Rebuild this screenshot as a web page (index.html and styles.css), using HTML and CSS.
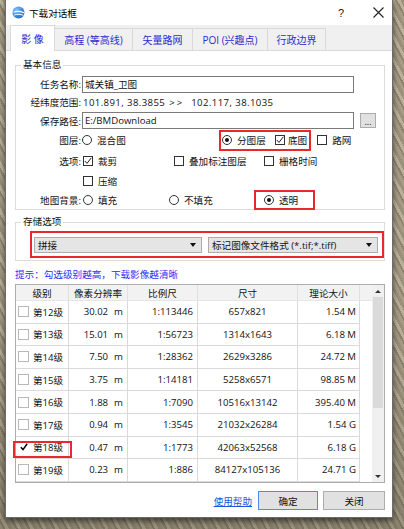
FILE: index.html
```html
<!DOCTYPE html>
<html lang="zh-CN">
<head>
<meta charset="utf-8">
<title>下载对话框</title>
<link rel="stylesheet" href="styles.css">
</head>
<body>
<div class="dialog">
  <div class="titlebar">
    <svg class="appicon" width="13" height="13" viewBox="0 0 13 13">
      <defs>
        <radialGradient id="g" cx="0.35" cy="0.3" r="0.8">
          <stop offset="0" stop-color="#7cc4ff"/>
          <stop offset="1" stop-color="#1464c8"/>
        </radialGradient>
      </defs>
      <circle cx="6.5" cy="6.5" r="6" fill="url(#g)"/>
      <path d="M1.5 6.2 C4 5 8 5.2 12.3 6.8" stroke="#fff" stroke-width="1.1" fill="none"/>
      <path d="M2.2 9 C5 8 8.5 8.2 11.5 9.3" stroke="#fff" stroke-width="1" fill="none"/>
    </svg>
    <span class="title">下载对话框</span>
    <span class="help">?</span>
    <span class="close">
      <svg width="11" height="11" viewBox="0 0 11 11"><path d="M0.5 0.5 L10.5 10.5 M10.5 0.5 L0.5 10.5" stroke="#222" stroke-width="1.1"/></svg>
    </span>
  </div>
  <div class="tabs">
    <span class="tab-lead"></span>
    <span class="tab active">影&nbsp;像</span>
    <span class="tab w2">高程 (等高线)</span>
    <span class="tab w3">矢量路网</span>
    <span class="tab w4">POI (兴趣点)</span>
    <span class="tab w5">行政边界</span>
    <span class="tab-fill"></span>
  </div>
  <div class="panel">
    <fieldset class="group basic">
      <legend>基本信息</legend>
      <div class="row r1">
        <span class="lbl">任务名称:</span>
        <span class="input">城关镇_卫图</span>
      </div>
      <div class="row r2">
        <span class="lbl">经纬度范围:</span>
        <span class="coord">101.891, 38.3855</span>
        <span class="arrow">&gt;&gt;</span>
        <span class="coord">102.117, 38.1035</span>
      </div>
      <div class="row r3">
        <span class="lbl">保存路径:</span>
        <span class="input">E:/BMDownload</span>
        <span class="browse">...</span>
      </div>
      <div class="row r4">
        <span class="lbl">图层:</span>
        <span class="opt w-mix"><span class="radio"></span>混合图</span>
        <span class="redbox rb-layer">
          <span class="opt w-split"><span class="radio on"></span>分图层</span>
          <span class="opt tight"><span class="cb on"><svg width="8" height="8" viewBox="0 0 8 8"><path d="M0.8 4 L3 6.4 L7.3 0.8" stroke="#222" stroke-width="1" fill="none"/></svg></span>底图</span>
        </span>
        <span class="opt road"><span class="cb"></span>路网</span>
      </div>
      <div class="row r5">
        <span class="lbl">选项:</span>
        <span class="opt w-cut"><span class="cb on"><svg width="8" height="8" viewBox="0 0 8 8"><path d="M0.8 4 L3 6.4 L7.3 0.8" stroke="#222" stroke-width="1" fill="none"/></svg></span>裁剪</span>
        <span class="opt w-label"><span class="cb"></span>叠加标注图层</span>
        <span class="opt"><span class="cb"></span>栅格时间</span>
      </div>
      <div class="row r6">
        <span class="lbl"></span>
        <span class="opt"><span class="cb"></span>压缩</span>
      </div>
      <div class="row r7">
        <span class="lbl">地图背景:</span>
        <span class="opt w-fill"><span class="radio"></span>填充</span>
        <span class="opt w-nofill"><span class="radio"></span>不填充</span>
        <span class="redbox rb-bg">
          <span class="opt"><span class="radio on"></span>透明</span>
        </span>
      </div>
    </fieldset>

    <fieldset class="group store">
      <legend>存储选项</legend>
      <div class="redbox rb-store">
        <span class="select s1"><span>拼接</span><span class="tri"></span></span>
        <span class="select s2"><span>标记图像文件格式 (*.tif;*.tiff)</span><span class="tri"></span></span>
      </div>
    </fieldset>

    <div class="hint">提示：勾选级别越高，下载影像越清晰</div>

    <div class="table">
      <div class="grid">
        <div class="th">级别</div>
        <div class="th">像素分辨率</div>
        <div class="th">比例尺</div>
        <div class="th">尺寸</div>
        <div class="th">理论大小</div>
        <div class="th blank"></div>

        <div class="td lv"><span class="tcb"></span>第12级</div>
        <div class="td num">30.02<span class="unit">m</span></div>
        <div class="td num">1:113446</div>
        <div class="td ctr">657x821</div>
        <div class="td num sz">1.54 M</div>
        <div class="td blank"></div>

        <div class="td lv"><span class="tcb"></span>第13级</div>
        <div class="td num">15.01<span class="unit">m</span></div>
        <div class="td num">1:56723</div>
        <div class="td ctr">1314x1643</div>
        <div class="td num sz">6.18 M</div>
        <div class="td blank"></div>

        <div class="td lv"><span class="tcb"></span>第14级</div>
        <div class="td num">7.50<span class="unit">m</span></div>
        <div class="td num">1:28362</div>
        <div class="td ctr">2629x3286</div>
        <div class="td num sz">24.72 M</div>
        <div class="td blank"></div>

        <div class="td lv"><span class="tcb"></span>第15级</div>
        <div class="td num">3.75<span class="unit">m</span></div>
        <div class="td num">1:14181</div>
        <div class="td ctr">5258x6571</div>
        <div class="td num sz">98.85 M</div>
        <div class="td blank"></div>

        <div class="td lv"><span class="tcb"></span>第16级</div>
        <div class="td num">1.88<span class="unit">m</span></div>
        <div class="td num">1:7090</div>
        <div class="td ctr">10516x13142</div>
        <div class="td num sz">395.40 M</div>
        <div class="td blank"></div>

        <div class="td lv"><span class="tcb"></span>第17级</div>
        <div class="td num">0.94<span class="unit">m</span></div>
        <div class="td num">1:3545</div>
        <div class="td ctr">21032x26284</div>
        <div class="td num sz">1.54 G</div>
        <div class="td blank"></div>

        <div class="td lv"><span class="tcb on"><svg width="8" height="8" viewBox="0 0 8 8"><path d="M0.8 4.2 L3 6.6 L7.2 0.8" stroke="#000" stroke-width="1.5" fill="none"/></svg></span>第18级<span class="mark"></span></div>
        <div class="td num">0.47<span class="unit">m</span></div>
        <div class="td num">1:1773</div>
        <div class="td ctr">42063x52568</div>
        <div class="td num sz">6.18 G</div>
        <div class="td blank"></div>

        <div class="td lv"><span class="tcb"></span>第19级</div>
        <div class="td num">0.23<span class="unit">m</span></div>
        <div class="td num">1:886</div>
        <div class="td ctr">84127x105136</div>
        <div class="td num sz">24.71 G</div>
        <div class="td blank"></div>
      </div>
      <div class="scrollbar">
        <span class="sb-btn"><span class="up"></span></span>
        <span class="thumb"></span>
        <span class="track"></span>
        <span class="sb-btn"><span class="down"></span></span>
      </div>
    </div>

    <div class="actions">
      <a class="link">使用帮助</a>
      <span class="btn default">确定</span>
      <span class="btn">关闭</span>
    </div>
  </div>
</div>
</body>
</html>
```

FILE: styles.css
```css
html, body {
  margin: 0;
  padding: 0;
}
body {
  width: 404px;
  height: 529px;
  overflow: hidden;
  background:
    linear-gradient(180deg, rgba(0,0,0,0) 0 60%, rgba(60,55,40,0.25) 100%),
    repeating-linear-gradient(62deg, #a79d86 0 3px, #8e8571 3px 5px, #bab09a 5px 8px, #9a917b 8px 11px),
    #a39a84;
}
.dialog {
  margin-left: 5px;
  width: 388px;
  height: 518px;
  box-sizing: border-box;
  border: 1px solid #6c6c6c;
  border-top: none;
  background: #fff;
  display: flex;
  flex-direction: column;
  box-shadow: 0 3px 6px rgba(0,0,0,0.55);
  font-family: "Open Sans", "Noto Sans CJK SC", sans-serif;
  font-size: 9.6px;
  color: #111;
}

/* title bar */
.titlebar {
  height: 25px;
  flex: none;
  display: flex;
  align-items: center;
  padding-left: 6px;
  background: #fff;
}
.appicon { flex: none; }
.title {
  margin-left: 4px;
  font-size: 9.6px;
  color: #000;
}
.help {
  margin-left: auto;
  width: 14px;
  margin-right: 16px;
  text-align: center;
  font-family: "Liberation Sans", sans-serif;
  font-size: 11px;
  color: #222;
}
.close {
  width: 28px;
  display: flex;
  justify-content: center;
}

/* tabs */
.tabs {
  height: 26px;
  flex: none;
  display: flex;
  align-items: flex-end;
  background: #f0f0f0;
}
.tab-lead, .tab-fill {
  height: 26px;
  box-sizing: border-box;
  border-bottom: 1px solid #d9d9d9;
}
.tab-lead { width: 4px; flex: none; }
.tab-fill { flex: 1; }
.tab {
  flex: none;
  box-sizing: border-box;
  height: 23px;
  display: flex;
  align-items: center;
  justify-content: center;
  border-top: 1px solid #d9d9d9;
  border-right: 1px solid #d9d9d9;
  border-bottom: 1px solid #d9d9d9;
  color: #2b2bd2;
  font-size: 10px;
  background: #f0f0f0;
}
.tab.active {
  width: 45px;
  height: 26px;
  background: #fff;
  border-left: 1px solid #d9d9d9;
  border-bottom: none;
  color: #2424d8;
}
.tab.w2 { width: 78px; }
.tab.w3 { width: 60px; }
.tab.w4 { width: 75px; }
.tab.w5 { width: 58px; }

/* panel */
.panel {
  flex: 1;
  display: flex;
  flex-direction: column;
  padding: 7px 7px 0 9px;
  background: #fff;
}
.group {
  margin: 0;
  padding: 0;
  border: 1px solid #dcdcdc;
  min-width: 0;
}
.group legend {
  margin-left: 5px;
  padding: 0 2px;
  line-height: 14px;
  font-size: 9.6px;
  color: #111;
}
.basic { padding-top: 3px; }
.row {
  display: flex;
  align-items: center;
}
.r1 { height: 18px; }
.r2 { height: 18px; }
.r3 { height: 19px; }
.r4 { height: 20px; }
.r5 { height: 22px; }
.r6 { height: 18px; }
.r7 { height: 19px; }
.lbl {
  width: 65px;
  flex: none;
  text-align: right;
  margin-right: 1px;
  white-space: nowrap;
}
.input {
  width: 272px;
  height: 17px;
  box-sizing: border-box;
  border: 1px solid #7a7a7a;
  padding-left: 2px;
  display: flex;
  align-items: center;
  background: #fff;
}
.coord { margin-left: 1px; white-space: nowrap; letter-spacing: 0.4px; }
.arrow { margin: 0 6px 0 4px; letter-spacing: 2px; }
.browse {
  margin-left: 6px;
  width: 16px;
  height: 15px;
  box-sizing: border-box;
  border: 1px solid #adadad;
  background: #e1e1e1;
  display: flex;
  align-items: flex-end;
  justify-content: center;
  line-height: 10px;
  font-size: 9px;
}
.opt {
  display: inline-flex;
  align-items: center;
  gap: 5px;
  flex: none;
  white-space: nowrap;
}
.opt.tight { gap: 3px; }
.radio, .cb {
  width: 10px;
  height: 10px;
  box-sizing: border-box;
  border: 1px solid #333;
  background: #fff;
  flex: none;
  display: flex;
  align-items: center;
  justify-content: center;
}
.radio { border-radius: 50%; }
.radio.on::after {
  content: "";
  width: 4px;
  height: 4px;
  border-radius: 50%;
  background: #111;
}
.w-mix { width: 137px; }
.redbox {
  border: 2px solid #e8282d;
  box-sizing: border-box;
  display: flex;
  align-items: center;
  flex: none;
}
.rb-layer {
  height: 21px;
  padding: 0 2px 0 1px;
}
.w-split { width: 53px; }
.road { margin-left: 6px; }
.w-cut { width: 91px; margin-left: 1px; }
.w-label { width: 90px; }
.r6 .opt { margin-left: 1px; }
.w-fill { width: 86px; margin-left: 1px; }
.w-nofill { width: 85px; }
.rb-bg {
  height: 20px;
  padding: 0 15px 0 8px;
}

/* storage options */
.store { margin-top: 5px; padding: 2px 0 2px 0; }
.rb-store {
  margin-left: 14px;
  height: 27px;
  padding: 4px 4px 3px 2px;
  gap: 6px;
}
.select {
  height: 16px;
  box-sizing: border-box;
  border: 1px solid #acacac;
  background: #e5e5e5;
  display: flex;
  align-items: center;
  justify-content: space-between;
  padding: 0 5px 0 3px;
  flex: none;
  white-space: nowrap;
}
.s1 { width: 168px; }
.s2 { width: 170px; }
.tri {
  width: 0;
  height: 0;
  border-left: 3px solid transparent;
  border-right: 3px solid transparent;
  border-top: 4px solid #111;
}

.hint {
  padding-top: 5px;
  line-height: 18px;
  color: #2d2dff;
  white-space: nowrap;
}

/* table */
.table {
  height: 199px;
  box-sizing: border-box;
  border: 1px solid #acacac;
  display: flex;
  flex: none;
}
.grid {
  flex: 1;
  display: grid;
  grid-template-columns: 53px 59px 70px 100px 62px 1fr;
  grid-template-rows: 16px repeat(8, 22.6px);
  align-content: start;
}
.th, .td {
  box-sizing: border-box;
  border-right: 1px solid #dadada;
  border-bottom: 1px solid #dadada;
  display: flex;
  align-items: center;
  white-space: nowrap;
  color: #111;
}
.th {
  justify-content: center;
  background: #f2f2f2;
  border-right-color: #e0e0e0;
  border-bottom-color: #e6e6e6;
}
.th.blank { border-right: none; }
.td.blank { border: none; }
.lv { padding-left: 2px; gap: 4px; position: relative; }
.num { justify-content: flex-end; padding-right: 4px; }
.num .unit { margin-left: 6px; }
.sz { padding-right: 3px; }
.ctr { justify-content: center; }
.tcb {
  width: 11px;
  height: 11px;
  box-sizing: border-box;
  border: 1px solid #b8b8b8;
  background: #fff;
  display: flex;
  align-items: center;
  justify-content: center;
  flex: none;
}
.tcb.on { border-color: #fff; }
.mark {
  position: absolute;
  left: -3px;
  top: 4px;
  width: 59px;
  height: 17px;
  box-sizing: border-box;
  border: 2px solid #e8282d;
}
.scrollbar {
  width: 12px;
  flex: none;
  display: flex;
  flex-direction: column;
  background: #f0f0f0;
}
.sb-btn {
  height: 12px;
  flex: none;
  display: flex;
  align-items: center;
  justify-content: center;
  background: #f0f0f0;
}
.up, .down {
  width: 0;
  height: 0;
  border-left: 3px solid transparent;
  border-right: 3px solid transparent;
}
.up { border-bottom: 3px solid #333; }
.down { border-top: 3px solid #333; }
.thumb {
  height: 111px;
  flex: none;
  margin: 0 1px;
  background: #dadada;
}
.track { flex: 1; }

/* actions */
.actions {
  margin-top: 8px;
  height: 19px;
  display: flex;
  align-items: center;
  justify-content: flex-end;
}
.link {
  color: #1a56e0;
  text-decoration: underline;
  margin-right: 6px;
}
.btn {
  width: 60px;
  height: 19px;
  box-sizing: border-box;
  border: 1px solid #adadad;
  background: #e1e1e1;
  display: flex;
  align-items: center;
  justify-content: center;
}
.btn.default {
  border-color: #4a8fe0;
  margin-right: 5px;
}
.btn + .btn { width: 62px; }
```
